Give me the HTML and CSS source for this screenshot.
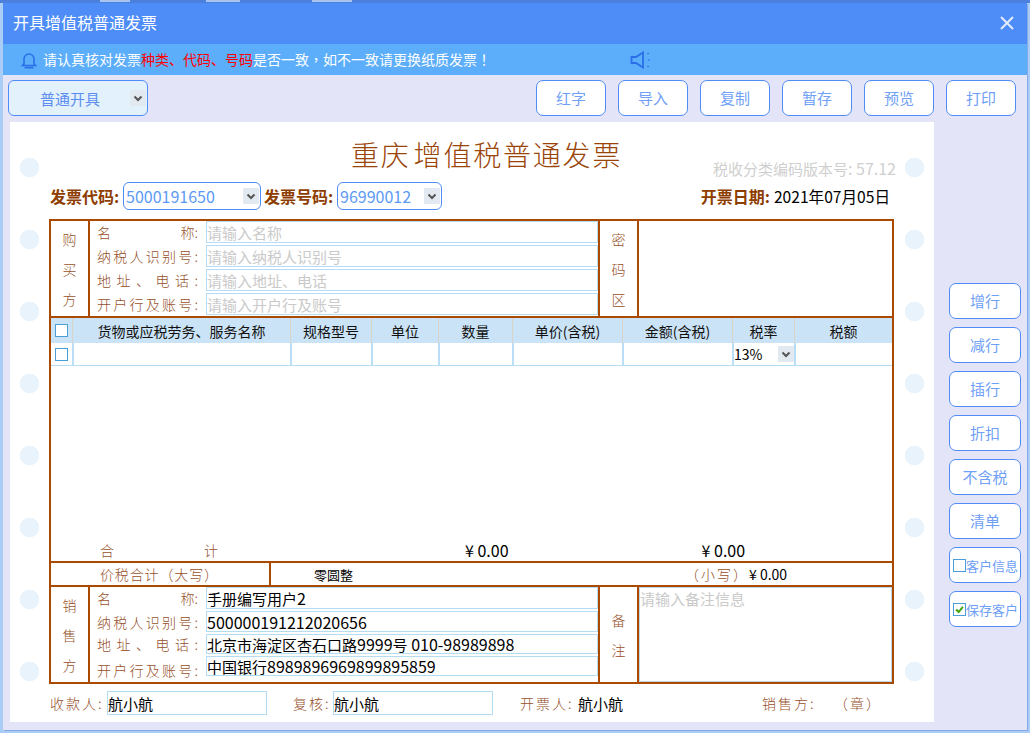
FILE: index.html
```html
<!DOCTYPE html>
<html lang="zh-CN">
<head>
<meta charset="utf-8">
<title>开具增值税普通发票</title>
<link rel="stylesheet" href="styles.css">
</head>
<body>
<div class="window">
  <header class="titlebar">
    <span class="titlebar-text">开具增值税普通发票</span>
    <svg class="close-icon" viewBox="0 0 14 14"><path d="M1 1l12 12M13 1L1 13"/></svg>
  </header>
  <div class="notice">
    <svg class="bell-icon" viewBox="0 0 16 18"><path d="M3 13V8a5 5 0 0 1 10 0v5l1.5 1.5h-13zM3.5 16.6h9"/></svg>
    <span class="notice-text">请认真核对发票<em>种类、代码、号码</em>是否一致<span class="punct" lang="zh-TW">，</span>如不一致请更换纸质发票<span class="punct" lang="zh-TW">！</span></span>
    <svg class="speaker-icon" viewBox="0 0 21 18"><path d="M1.5 6h4.5l7-4.5v15L6 12H1.5z"/><path class="dots" d="M17 2.5h2M18 9h2M17 15.5h2"/></svg>
  </div>
  <div class="toolbar">
    <div class="select select-mode">
      <span class="select-value">普通开具</span>
      <svg class="chevron" viewBox="0 0 16 16"><path d="M4.5 6.5L8 10l3.5-3.5"/></svg>
    </div>
    <div class="toolbar-actions">
      <button class="btn">红字</button>
      <button class="btn">导入</button>
      <button class="btn">复制</button>
      <button class="btn">暂存</button>
      <button class="btn">预览</button>
      <button class="btn">打印</button>
    </div>
  </div>
  <main class="main">
    <section class="paper">
      <div class="title-row">
        <h1 class="invoice-title">重庆 增值税普通发票</h1>
        <span class="version">税收分类编码版本号<span class="num">: 57.12</span></span>
      </div>
      <div class="meta-row">
        <span class="meta-label meta-code-label">发票代码:</span>
        <div class="select select-code">
          <span class="select-value">5000191650</span>
          <svg class="chevron" viewBox="0 0 16 16"><path d="M4.5 6.5L8 10l3.5-3.5"/></svg>
        </div>
        <span class="meta-label meta-number-label">发票号码:</span>
        <div class="select select-number">
          <span class="select-value">96990012</span>
          <svg class="chevron" viewBox="0 0 16 16"><path d="M4.5 6.5L8 10l3.5-3.5"/></svg>
        </div>
        <span class="meta-label meta-date-label">开票日期:</span>
        <span class="meta-date">2021年07月05日</span>
      </div>

      <div class="invoice">
        <div class="party">
          <div class="side-cell">购买方</div>
          <div class="fields">
            <div class="field"><label class="field-label">名 <span class="keep">称:</span></label><input class="field-input" placeholder="请输入名称"></div>
            <div class="field"><label class="field-label">纳税人识别号:</label><input class="field-input" placeholder="请输入纳税人识别号"></div>
            <div class="field"><label class="field-label">地址、电话:</label><input class="field-input" placeholder="请输入地址、电话"></div>
            <div class="field"><label class="field-label">开户行及账号:</label><input class="field-input" placeholder="请输入开户行及账号"></div>
          </div>
          <div class="side-cell side-cell-right">密码区</div>
          <div class="party-extra"></div>
        </div>

        <div class="goods">
          <div class="goods-head">
            <div class="goods-cell"><input type="checkbox" class="check"></div>
            <div class="goods-cell goods-name">货物或应税劳务、服务名称</div>
            <div class="goods-cell">规格型号</div>
            <div class="goods-cell">单位</div>
            <div class="goods-cell">数量</div>
            <div class="goods-cell">单价(含税)</div>
            <div class="goods-cell">金额(含税)</div>
            <div class="goods-cell">税率</div>
            <div class="goods-cell">税额</div>
          </div>
          <div class="goods-row">
            <div class="goods-cell"><input type="checkbox" class="check"></div>
            <div class="goods-cell"></div>
            <div class="goods-cell"></div>
            <div class="goods-cell"></div>
            <div class="goods-cell"></div>
            <div class="goods-cell"></div>
            <div class="goods-cell"></div>
            <div class="goods-cell tax-cell">
              <span>13%</span>
              <svg class="chevron" viewBox="0 0 16 16"><path d="M4.5 6.5L8 10l3.5-3.5"/></svg>
            </div>
            <div class="goods-cell"></div>
          </div>
          <div class="goods-total">
            <span class="total-label">合 计</span>
            <span class="amount amount-sum">¥ 0.00</span>
            <span class="amount amount-tax">¥ 0.00</span>
          </div>
        </div>

        <div class="sum-row">
          <div class="sum-label">价税合计（大写）</div>
          <div class="sum-value">
            <span class="sum-upper">零圆整</span>
            <span class="sum-lower-label">（小写）</span>
            <span class="sum-lower">¥ 0.00</span>
          </div>
        </div>

        <div class="party party-seller">
          <div class="side-cell">销售方</div>
          <div class="fields fields-seller">
            <div class="field"><label class="field-label">名 <span class="keep">称:</span></label><div class="field-input filled">手册编写用户<span class="num">2</span></div></div>
            <div class="field"><label class="field-label">纳税人识别号:</label><div class="field-input filled"><span class="num">500000191212020656</span></div></div>
            <div class="field"><label class="field-label">地址、电话:</label><div class="field-input filled">北京市海淀区杏石口路<span class="num">9999</span>号<span class="num"> 010-98989898</span></div></div>
            <div class="field field-low"><label class="field-label">开户行及账号:</label><div class="field-input filled">中国银行<span class="num">8989896969899895859</span></div></div>
          </div>
          <div class="side-cell side-cell-right">备注</div>
          <textarea class="remark" placeholder="请输入备注信息"></textarea>
        </div>
      </div>

      <div class="signers">
        <span class="signer-label signer-payee">收款人:</span>
        <input class="signer-input" value="航小航">
        <span class="signer-label signer-review">复核:</span>
        <input class="signer-input" value="航小航">
        <span class="signer-label signer-issuer">开票人:</span>
        <span class="signer-value">航小航</span>
        <span class="signer-label signer-seller">销售方:</span>
        <span class="signer-label">（章）</span>
      </div>
    </section>

    <aside class="sidebar">
      <button class="btn btn-side">增行</button>
      <button class="btn btn-side">减行</button>
      <button class="btn btn-side">插行</button>
      <button class="btn btn-side">折扣</button>
      <button class="btn btn-side">不含税</button>
      <button class="btn btn-side">清单</button>
      <button class="btn btn-side btn-check"><input type="checkbox" class="check">客户信息</button>
      <button class="btn btn-side btn-check"><span class="checked"><svg viewBox="0 0 13 13"><path d="M2.5 6.5l3 3 5-6"/></svg></span>保存客户</button>
    </aside>
  </main>
</div>
</body>
</html>
```

FILE: styles.css
```css
* { box-sizing: border-box; }

html, body { margin: 0; height: 100%; }

body {
  width: 1030px;
  height: 733px;
  padding: 3px 3px 3px 3px;
  overflow: hidden;
  font-family: "Noto Sans CJK SC", "Liberation Sans", sans-serif;
  background-color: #a9cdf6;
  background-image:
    linear-gradient(#a9c4ef, #a9c4ef),
    linear-gradient(#a9c4ef, #a9c4ef),
    linear-gradient(#a9c4ef, #a9c4ef),
    linear-gradient(#4b80dc, #4b80dc);
  background-repeat: no-repeat;
  background-size: 30px 2px, 34px 2px, 40px 2px, 100% 3px;
  background-position: 100px 0, 206px 0, 312px 0, 0 0;
}

.window {
  display: flex;
  flex-direction: column;
  height: 727px;
  background: #e4e4f8;
  box-shadow: 1px 1px 0 #86a9e4;
}

.titlebar {
  display: flex;
  align-items: center;
  justify-content: space-between;
  flex: 0 0 41px;
  padding: 0 13px 0 10px;
  background: #4e8cf7;
  color: #fff;
  font-size: 16px;
}

.titlebar-text { margin-bottom: 3px; }

.close-icon { width: 14px; height: 14px; margin-bottom: 1px; fill: none; stroke: #e4ecfd; stroke-width: 2; }

.notice {
  display: flex;
  align-items: center;
  flex: 0 0 31px;
  padding-left: 18px;
  background: #5caefb;
  color: #fff;
  font-size: 14px;
}

.notice em { color: #f00; font-style: normal; }

.notice-text { margin-bottom: 2px; }

.punct { font-family: "Noto Sans CJK TC", sans-serif; }

.bell-icon { width: 16px; height: 18px; margin-right: 6px; fill: none; stroke: #2a6fe8; stroke-width: 1.6; }

.speaker-icon { width: 21px; height: 18px; margin-left: 139px; fill: none; stroke: #2a6fe8; stroke-width: 1.8; }
.speaker-icon .dots { stroke-width: 1.2; }

.toolbar {
  display: flex;
  justify-content: space-between;
  align-items: flex-start;
  flex: 0 0 47px;
  padding: 5px 11px 0 5px;
}

.toolbar-actions { display: flex; gap: 12px; }

.btn {
  width: 70px;
  height: 36px;
  padding: 0 0 2px;
  background: #fff;
  border: 1px solid #4f8cf7;
  border-radius: 7px;
  color: #6f9ff6;
  font-family: inherit;
  font-size: 15px;
}

.select {
  position: relative;
  display: flex;
  align-items: center;
  border: 1px solid #4f8cf7;
  border-radius: 6px;
  background: #fff;
  color: #5c9af5;
}

.chevron { flex: none; width: 16px; height: 16px; background: #e3e9f0; fill: none; stroke: #555; stroke-width: 2; }

.select-mode {
  justify-content: space-between;
  width: 140px;
  height: 36px;
  padding: 0 1px 0 31px;
  background: #e3f1fd;
  color: #5b8def;
  font-size: 15px;
}

.select-code, .select-number {
  justify-content: space-between;
  height: 28px;
  padding: 0 1px 0 2px;
  font-size: 16px;
}

.select-code { width: 138px; }
.select-number { width: 105px; }

.main { display: flex; flex: 1; min-height: 0; padding-left: 7px; }

.paper {
  flex: 0 0 924px;
  height: 600px;
  background-color: #fff;
  background-image:
    radial-gradient(circle at 9.5px 9.5px, #e8f3fb 9.5px, transparent 10px),
    radial-gradient(circle at 9.5px 9.5px, #e8f3fb 9.5px, transparent 10px);
  background-size: 19px 72px;
  background-repeat: repeat-y;
  background-position: 10px 36px, 895px 36px;
}

.title-row { display: flex; height: 60px; padding: 13px 38px 0 341px; justify-content: space-between; }

.invoice-title {
  margin: 0;
  color: #9a4408;
  font-size: 28px;
  font-weight: 300;
  line-height: 38px;
  letter-spacing: 1.8px;
  word-spacing: -5px;
  white-space: pre;
}

.version { align-self: flex-end; margin-bottom: 2px; color: #cfcfcf; font-size: 15px; line-height: 22px; }

.num { font-size: 16px; }

.meta-row {
  display: flex;
  align-items: center;
  gap: 3px;
  height: 28px;
  margin: 0 44px 9px 39px;
  color: #8e3d00;
}

.meta-label { flex: none; font-size: 16px; font-weight: 700; }
.meta-code-label { width: 71px; padding-left: 1px; }
.meta-number-label { width: 70px; }
.meta-date-label { margin-left: auto; }
.meta-date { margin-left: 1px; color: #000; font-size: 15.6px; }

.invoice {
  width: 845px;
  height: 465px;
  margin-left: 39px;
  border: 2px solid #a94a00;
}

.party {
  display: grid;
  grid-template-columns: 37px 510px 39px 1fr;
  height: 97px;
  border-bottom: 2px solid #a94a00;
}

.party-seller { height: 95px; border-bottom: 0; }

.side-cell {
  display: flex;
  align-items: center;
  justify-content: center;
  padding: 0 11px;
  color: #96502a;
  font-size: 14px;
  font-weight: 300;
  line-height: 30px;
  text-align: center;
}

.fields, .side-cell-right, .remark, .party-extra { border-left: 2px solid #a94a00; }

.fields {
  display: grid;
  grid-template-rows: repeat(4, 22px);
  row-gap: 2px;
}

.fields-seller { grid-template-rows: 22px 21px 20px 20px; }

.field { display: flex; align-items: center; min-height: 0; }

.field-label {
  flex: none;
  width: 101px;
  margin: 0 8px 0 7px;
  color: #96502a;
  font-size: 14px;
  font-weight: 300;
  text-align: justify;
  text-align-last: justify;
  white-space: nowrap;
}

.field-low .field-label { margin-top: 7px; }

.keep { display: inline-block; }

.field-input {
  flex: 1;
  min-width: 0;
  height: 100%;
  padding: 0;
  border: 1px solid #b5dcf5;
  border-radius: 0;
  outline: 0;
  font-family: inherit;
  font-size: 15px;
  color: #000;
}

.filled { display: flex; align-items: center; line-height: 1; white-space: pre; }

.field-input::placeholder, .remark::placeholder { color: #cacaca; opacity: 1; }

.remark {
  display: block;
  height: 95px;
  padding: 2px 1px 0;
  background: #fff;
  border-width: 0 0 0 2px;
  box-shadow: inset 0 0 0 1px #bcd8e6;
  outline: 0;
  resize: none;
  font-family: inherit;
  font-size: 15px;
  line-height: 20px;
}

.goods {
  display: flex;
  flex-direction: column;
  height: 243px;
}

.goods-head, .goods-row {
  display: grid;
  grid-template-columns: 21px 218px 81px 67px 74px 110px 110px 62px 1fr;
}

.goods-head {
  flex: 0 0 25px;
  background: #cbe3f6;
  font-size: 14px;
  color: #111;
}

.goods-row { flex: 0 0 23px; border-bottom: 1px solid #b5dcf5; }

.goods-cell {
  display: flex;
  align-items: center;
  justify-content: center;
  min-width: 0;
  border-left: 1px solid #dcd3c8;
}

.goods-head .goods-cell:first-child, .goods-row .goods-cell:first-child { border-left: 0; padding-right: 1px; }

.goods-row .goods-cell { border-left: 2px solid #b9def6; }

.check {
  flex: none;
  width: 13px;
  height: 13px;
  margin: 0;
  appearance: none;
  background: #fff;
  border: 1px solid #4a9fd8;
}

.tax-cell { justify-content: space-between; padding-right: 0; font-size: 14px; }

.goods-total {
  display: flex;
  align-items: center;
  height: 22px;
  margin-top: auto;
  color: #000;
  font-size: 16px;
}

.total-label {
  flex: none;
  width: 118px;
  margin-left: 49px;
  color: #96502a;
  font-size: 14px;
  font-weight: 300;
  text-align-last: justify;
}

.amount-sum { margin-left: 247px; }
.amount-tax { margin-left: 193px; }

.sum-row {
  display: grid;
  grid-template-columns: 218px 1fr;
  height: 26px;
  border-top: 2px solid #a94a00;
  border-bottom: 2px solid #a94a00;
}

.sum-label {
  width: 167px;
  padding-left: 49px;
  color: #96502a;
  font-size: 14px;
  font-weight: 300;
  line-height: 22px;
  text-align-last: justify;
}

.sum-value {
  display: flex;
  align-items: center;
  border-left: 2px solid #a94a00;
  color: #000;
  font-size: 13px;
}

.sum-upper { margin-left: 43px; }
.sum-lower-label { width: 64px; margin-left: 332px; color: #96502a; font-size: 14px; font-weight: 300; letter-spacing: 2px; white-space: nowrap; }
.sum-lower { font-size: 14px; }

.signers { display: flex; align-items: center; height: 24px; margin: 7px 0 0 40px; color: #96502a; }

.signer-label { flex: none; font-size: 14px; font-weight: 300; letter-spacing: 2px; white-space: nowrap; }
.signer-payee { width: 57px; }
.signer-review { width: 40px; margin-left: 26px; }
.signer-issuer { width: 58px; margin-left: 27px; }
.signer-seller { width: 72px; margin-left: 139px; }

.signer-input {
  flex: none;
  width: 160px;
  height: 24px;
  padding: 0;
  border: 1px solid #b5dcf5;
  border-radius: 0;
  outline: 0;
  color: #000;
  font-family: inherit;
  font-size: 15px;
}

.signer-value { color: #000; font-size: 15px; }

.sidebar {
  display: flex;
  flex-direction: column;
  align-items: flex-start;
  gap: 8px;
  flex: 1;
  padding: 161px 0 0 15px;
}

.btn-side { width: 72px; flex: none; }

.btn-check {
  display: flex;
  align-items: center;
  padding: 0 0 0 3px;
  font-size: 13px;
  white-space: nowrap;
}

.checked {
  display: flex;
  flex: none;
  width: 13px;
  height: 13px;
  background: #fff;
  border: 1px solid #4a9fd8;
}

.checked svg { width: 11px; height: 11px; fill: none; stroke: #3fa50e; stroke-width: 2.4; }
```
